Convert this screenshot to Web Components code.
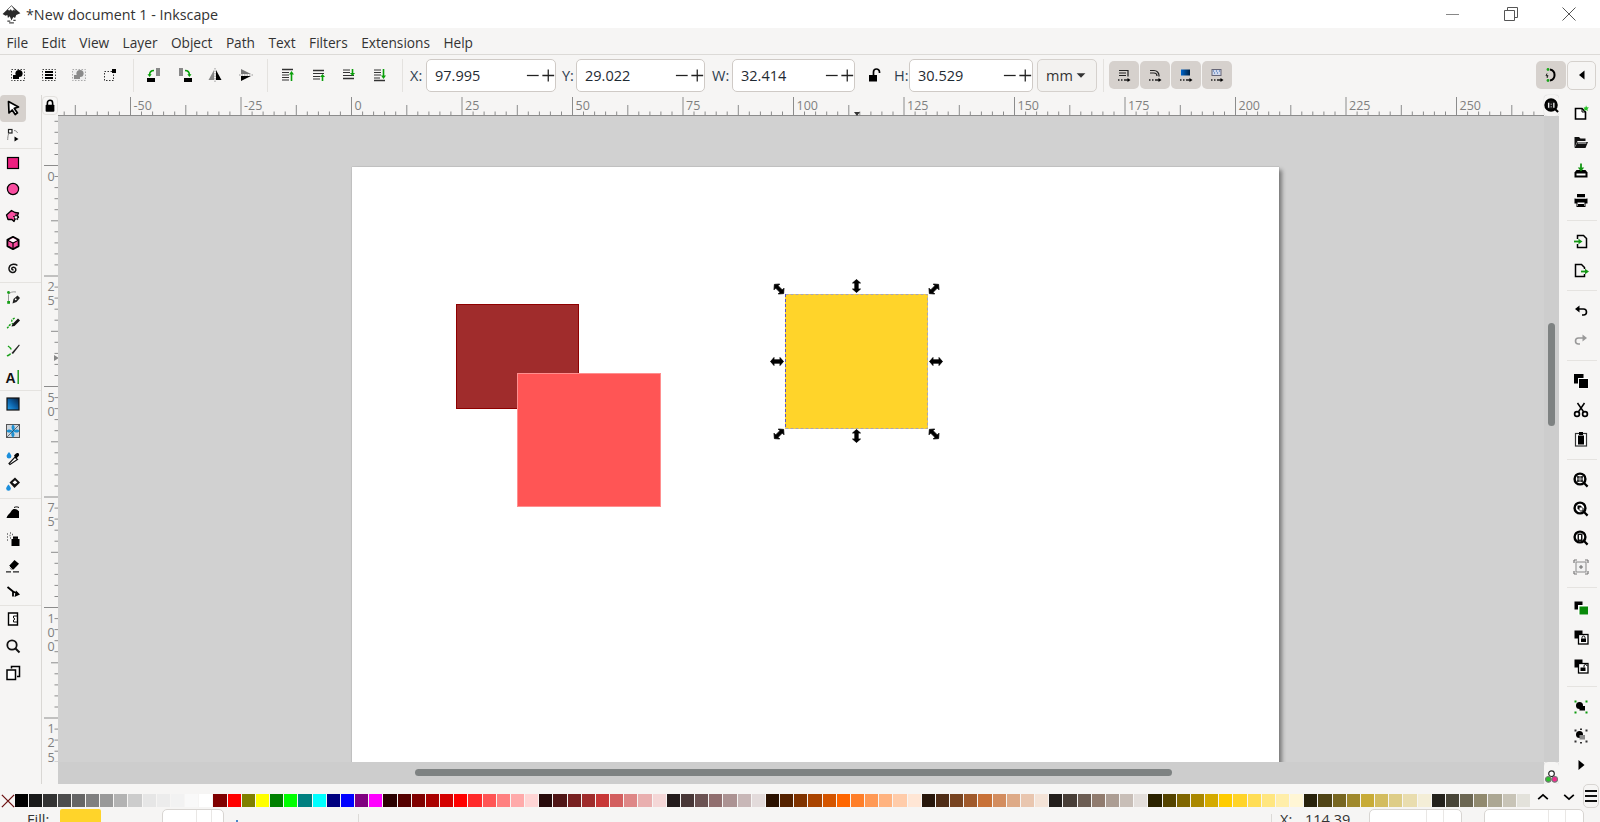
<!DOCTYPE html>
<html lang="en">
<head>
<meta charset="utf-8">
<title>Inkscape</title>
<style>
  html, body { margin: 0; height: 100%; overflow: hidden; background: #f6f5f4; }
  body { font: 14.5px "Open Sans", "Noto Sans", sans-serif; color: #2e3436; }
  ink-app { width: 1600px; height: 822px; }
</style>
</head>
<body>
<ink-app>
  <ink-titlebar>*New document 1 - Inkscape</ink-titlebar>
  <ink-menubar items="File,Edit,View,Layer,Object,Path,Text,Filters,Extensions,Help"></ink-menubar>
  <ink-toolbar></ink-toolbar>
  <ink-workspace>
    <ink-canvas slot="canvas">
      <ink-shape x="398" y="188" w="123" h="105" fill="#a02c2c" line="#8f0000"></ink-shape>
      <ink-shape x="459" y="257" w="144" h="134" fill="#ff5555" line="#ff8f8f"></ink-shape>
      <ink-shape x="727" y="178" w="143" h="135" fill="#ffd42a" line="#ffd42a"></ink-shape>
      <ink-handles x="727" y="178" w="143" h="135"></ink-handles>
    </ink-canvas>
  </ink-workspace>
  <ink-palette></ink-palette>
  <ink-statusbar></ink-statusbar>
</ink-app>

<script>
// --- icons, all on a 16x16 box ---
const GREEN = '#0a9f0a';
const DASH = '<rect x="1.5" y="2.5" width="13" height="11" fill="none" stroke="#444" stroke-dasharray="1.5 1.5"/>';
const LENS = (inner) => `<circle cx="7" cy="7" r="5.4" fill="#fff" stroke="#000" stroke-width="2.4"/>${inner}<path d="M11 11l3.6 3.6" stroke="#000" stroke-width="2.2"/>`;
const TWO = (front) => `<rect x="1.5" y="1.5" width="8" height="8" fill="#000"/><rect x="5" y="5" width="10" height="10" fill="#fff"/>${front}`;
const LINES = (ys) => ys.map((y) => `<path d="M2 ${y}h7" stroke="#333"/>`).join('');
const MOVE_TAIL = '<path d="M2 13h1.5M5 13h1.5M8 13h4" stroke="#222" stroke-width="1.3"/><path d="M11.5 11l3 2-3 2z"/>';
const ICONS = {
  selAll: `${DASH}<circle cx="9" cy="6.5" r="3.6"/><rect x="3" y="8" width="6" height="4"/>`,
  selLayers: `${DASH}<path d="M4 5h8M4 8h8M4 11h8" stroke="#000" stroke-width="1.8"/>`,
  deselect: `<rect x="1.5" y="2.5" width="13" height="11" fill="#eee" stroke="#aaa" stroke-dasharray="1.5 1.5"/><circle cx="9" cy="6.5" r="3.6" fill="#8a8a8a"/><rect x="3" y="8" width="6" height="4" fill="#8a8a8a"/>`,
  selBox: `<rect x="2.5" y="4.5" width="9" height="9" fill="none" stroke="#333" stroke-dasharray="1.5 1.5"/><rect x="10" y="2" width="4" height="4"/>`,
  rotCcw: `<rect x="1" y="11" width="8" height="4"/><rect x="10" y="1" width="4" height="8" fill="#888"/><path d="M8 3.5C5 3.5 3.6 5 3.6 8" fill="none" stroke="${GREEN}" stroke-width="1.6"/><path d="M1.5 7.2h4.2L3.6 10z" fill="${GREEN}"/>`,
  rotCw: `<rect x="7" y="11" width="8" height="4"/><rect x="2" y="1" width="4" height="8" fill="#888"/><path d="M8 3.5c3 0 4.4 1.5 4.4 4.5" fill="none" stroke="${GREEN}" stroke-width="1.6"/><path d="M14.5 7.2h-4.2l2.1 2.8z" fill="${GREEN}"/>`,
  flipH: `<path d="M7 3v10H1.5z" fill="#888"/><path d="M9 3v10h5.5z"/><path d="M8 1v14" stroke="#999" stroke-dasharray="1.5 1"/>`,
  flipV: `<path d="M3 2l10 5H3z" fill="#777"/><path d="M3 9h10L3 14z"/><path d="M1 8h14" stroke="#999" stroke-dasharray="1.5 1"/>`,
  alignTop: `<path d="M2 2.5h11" stroke="#333" stroke-width="1.5"/>${LINES([5.5, 8, 10.5, 13])}<path d="M11.5 14V6" stroke="${GREEN}" stroke-width="1.6"/><path d="M9 7.5L11.5 4 14 7.5z" fill="${GREEN}"/>`,
  alignUp: `<path d="M2 3.5h11" stroke="#333" stroke-width="1.5"/><path d="M2 6.5h11" stroke="#333"/>${LINES([9.5, 12])}<path d="M11.5 14V9" stroke="${GREEN}" stroke-width="1.6"/><path d="M9 10l2.5-3L14 10z" fill="${GREEN}"/>`,
  alignDown: `${LINES([3, 5.5])}<path d="M2 8.5h11" stroke="#333"/><path d="M2 11.5h11" stroke="#333" stroke-width="1.5"/><path d="M11.5 2v5" stroke="${GREEN}" stroke-width="1.6"/><path d="M9 6l2.5 3L14 6z" fill="${GREEN}"/>`,
  alignBot: `${LINES([3, 5.5, 8])}<path d="M2 13.5h11" stroke="#333" stroke-width="1.5"/><path d="M2 11h6" stroke="#333"/><path d="M11.5 2v7" stroke="${GREEN}" stroke-width="1.6"/><path d="M9 8.5l2.5 3.5L14 8.5z" fill="${GREEN}"/>`,
  lockOpen: `<rect x="2" y="8" width="8" height="6.5"/><path d="M6.5 8V5a3 3 0 0 1 6 0v1" fill="none" stroke="#000" stroke-width="1.7"/>`,
  lockShut: `<rect x="3" y="7" width="10" height="8" rx="1"/><path d="M5 7.5V5a3 3 0 0 1 6 0v2.5" fill="none" stroke="#000" stroke-width="1.8"/>`,
  caret: `<path d="M3 6h10l-5 5z" fill="#333"/>`,
  left: `<path d="M10.5 3.5v9L5 8z"/>`,
  right: `<path d="M5.5 3v10l6-5z"/>`,
  moveRect: `<path d="M3 3.5h9v6M3 6h7M3 8.5h7" fill="none" stroke="#222" stroke-width="1.2"/>${MOVE_TAIL}`,
  moveRound: `<path d="M3 3.5h4a5 5 0 0 1 5 5v1M3 6h4a3 3 0 0 1 3 3" fill="none" stroke="#222" stroke-width="1.2"/>${MOVE_TAIL}`,
  moveGrad: `<defs><linearGradient id="bg"><stop offset="0" stop-color="#06c"/><stop offset="1" stop-color="#024"/></linearGradient></defs><rect x="3" y="2.5" width="9" height="6" fill="url(#bg)"/>${MOVE_TAIL}`,
  movePat: `<rect x="3" y="2.5" width="9" height="6" fill="#cfd8ee" stroke="#667"/><path d="M4 4h1M7 4h1M10 4h1M5 6h1M8 6h1" stroke="#36a"/>${MOVE_TAIL}`,
  snap: `<path d="M7 2.5a5.6 5.6 0 0 1 0 11" fill="none" stroke="#000" stroke-width="2"/><circle cx="5" cy="2.5" r="1.4" fill="#1aa31a"/><circle cx="5" cy="13.5" r="1.4" fill="#1aa31a"/><path d="M4 6.5L3 9l2-.5L4 11" fill="none" stroke="#222"/>`,
  oneToOne: `<circle cx="7.5" cy="7.5" r="6" stroke="#000" stroke-width="2.4" fill="#111"/><path d="M5 5v5.5M10.5 5v5.5M7.7 6v.8M7.7 9v.8" stroke="#fff" stroke-width="1.3"/><path d="M11.5 11.5L15 15" stroke="#000" stroke-width="2.2"/>`,
  select: `<path d="M3.5 1.5l10 5.5-4.200 1.400 3.200 4.500-2.300 1.600-3-4.500-3.200 3z" fill="#fff" stroke="#000" stroke-width="1.7" stroke-linejoin="round"/>`,
  node: `<rect x="3.5" y="2.5" width="3.5" height="3.5" fill="#fff" stroke="#222" stroke-width="1.2"/><path d="M9 3.5c2 .2 3 1 3.5 2.5M3.5 7c-.5 2-.8 3.5-.8 6" fill="none" stroke="#888"/><path d="M9.5 9.5l4 2.5-4 2.5z"/>`,
  rect: `<rect x="2.5" y="2.5" width="11" height="11" fill="#ed1f80" stroke="#000" stroke-width="1.2"/>`,
  circle: `<circle cx="8" cy="8" r="5.6" fill="#f84d9f" stroke="#000" stroke-width="1.2"/>`,
  star: `<path d="M6.5 2.5L10 4.500l3.500.5-1 2.500 1 2-3 .5L9 13.500l-2-2H3L1.500 7z" fill="#f84d9f" stroke="#000" stroke-width="1.3" stroke-linejoin="round"/><path d="M11 6.500l.8 1.800 1.900.2-1.400 1.300.4 1.900-1.700-1-1.700 1 .4-1.900-1.400-1.300 1.900-.2z" fill="#fff" stroke="#000" stroke-width=".9"/>`,
  box: `<path d="M8 1.8l5.600 3.100v6.200L8 14.200l-5.600-3.100V4.900z" fill="#f84d9f" stroke="#000" stroke-width="1.8" stroke-linejoin="round"/><path d="M2.800 5.200L8 8l5.200-2.800M8 8v6" fill="none" stroke="#000" stroke-width="1.2"/><path d="M8 3l4 2.200-4 2.100-4-2.100z" fill="#fff"/>`,
  spiral: `<path d="M8.5 8.5c-.8.8-2 0-1.700-1.200.4-1.500 2.900-1.600 3.800.2 1 2.200-1 4.500-3.500 4-3-.6-4-3.800-2.500-6.200C6.200 3 10 2.400 12.400 4.500" fill="none" stroke="#111" stroke-width="1.5"/>`,
  pen: `<path d="M3.5 13V5.5C5 3 8 2.500 11 3" fill="none" stroke="#999"/><circle cx="3.5" cy="3.5" r="1.4" fill="#18a018"/><rect x="2.2" y="12" width="2.8" height="2.8" fill="#18a018"/><path d="M7.5 14.500l1-4.500 4-3.500L15 9l-3.500 4z" fill="#222"/><circle cx="10.7" cy="10.3" r=".9" fill="#fff"/>`,
  pencil: `<path d="M2 13c2-1 1.500-2.500 3.500-3.500S8 9 7 7s1-3 3-4" fill="none" stroke="#18a018" stroke-width="1.4" stroke-dasharray="2 1"/><path d="M6.5 11.500l1-2.500L13 3.500l2 2L9.500 11z" fill="#111"/>`,
  callig: `<path d="M2 14c1.500-1 3-1 3.500-2.500M3 4c1.500 1 3 2 3 3.500" fill="none" stroke="#18a018" stroke-width="1.5"/><path d="M6.5 11L14 2.500l.8.7L8 12z" fill="#222"/>`,
  text: `<text x="0.5" y="13.5" font-family="Liberation Sans" font-weight="700" font-size="14" fill="#111">A</text><rect x="12.5" y="1" width="1.4" height="14" fill="#129612"/>`,
  gradient: `<defs><linearGradient id="tg" x1="1" y1="0" x2="0" y2="1"><stop offset="0" stop-color="#0a1f3a"/><stop offset=".5" stop-color="#0b5fa5"/><stop offset="1" stop-color="#29a4ee"/></linearGradient></defs><rect x="2" y="2" width="12" height="12" fill="url(#tg)" stroke="#111" stroke-width="1.2"/>`,
  mesh: `<rect x="1.5" y="1.5" width="13" height="13" fill="#cfd6dc" stroke="#555"/><path d="M8 8C6 5 6 3 8 1.500 10 3 10.500 6 8 8c3-2 5-2 6.500 0C13 10 10.500 10 8 8c2 3 2 5 0 6.500C6 13 5.500 10 8 8 5 10 3 10 1.500 8 3 6 5.500 6 8 8z" fill="#1c8fd0"/><path d="M8 8l6-6M8 8l-6 6" stroke="#123" stroke-width=".6"/>`,
  dropper: `<path d="M4 2S1.600 4.800 1.600 6.200a2.400 2.400 0 0 0 4.800 0C6.400 4.800 4 2 4 2z" fill="#1c8fdc"/><path d="M5 14.500l-1-1L10 7l2.500 2.500z" fill="#fff" stroke="#111" stroke-width="1.2"/><path d="M9 5.500l2-2c1-1 3-.5 3 .7.5 1.300-.5 2-1.500 3L11 8.700z"/>`,
  bucket: `<path d="M3.5 8.500S1.200 11 1.200 12.400a2.300 2.300 0 0 0 4.600 0C5.800 11 3.500 8.500 3.500 8.500z" fill="#1c8fdc"/><path d="M4.5 6.500l5.500-5 5 5L9.500 12z" fill="#111"/><path d="M7.5 6.500L10 4.200l2.300 2.300-2.500 1.800z" fill="#fff"/>`,
  tweak: `<path d="M1.5 14c1-3 2.500-4 3.500-5 1.200-1.200 1.800-4 4.500-4 2.700 0 3 1.600 4.500 2.200V14z"/><path d="M9 3.500c2-.8 3-.8 5 0" fill="none" stroke="#000"/>`,
  spray: `<rect x="6.5" y="8" width="8" height="7"/><rect x="8" y="5.5" width="5" height="2.4"/><path d="M2 3h1M5 2h1M2 6h1M4.500 4.500h1M7 3.500h1M5 7h1M2 9h1" stroke="#666" stroke-width="1.3"/>`,
  eraser: `<path d="M4 9l5.500-6L14 6.800l-5.500 5.700H6z"/><path d="M4 9l3 3.500" stroke="#fff"/><path d="M1 14.800h5M8 14.800h6" stroke="#222" stroke-width="1.2"/>`,
  connector: `<path d="M2.5 3L8 7.500v5M8 7.500l4.500 2" fill="none" stroke="#000" stroke-width="1.8"/><path d="M11 6.500l4 4-5.500 2.500z"/>`,
  page: `<path d="M3.5 2h9v12h-9z" fill="#fff" stroke="#000" stroke-width="1.4"/><path d="M12 5H8.500v2l1.500 1-1.500 1v2H12" fill="none" stroke="#111"/>`,
  zoom: `<circle cx="7" cy="7" r="4.700" fill="none" stroke="#111" stroke-width="1.8"/><path d="M10.500 10.500l4 4" stroke="#111" stroke-width="2"/>`,
  pages: `<path d="M6.5 3.500v-2h8v10H12" fill="none" stroke="#000" stroke-width="1.5"/><rect x="2" y="5" width="8.5" height="9.5" fill="#fff" stroke="#000" stroke-width="1.5"/>`,
  new: `<path d="M2.5 3.500H9L12.500 7v7h-10z" fill="#fff" stroke="#000" stroke-width="1.6"/><path d="M9 3.500V7h3.500" fill="none" stroke="#000"/><path d="M13 .3l.9 1.900 2 .3-1.400 1.500.3 2-1.800-1-1.800 1 .3-2L10.600 2.500l2-.3z" fill="#25c225"/>`,
  open: `<path d="M1.5 13.500V3H6l1.500 1.500h5V7h-8z" fill="#111"/><path d="M1.5 14l3-6H15l-2.500 6z" fill="#111"/><path d="M4.800 9h8.500" stroke="#eee"/>`,
  save: `<path d="M1.5 9.500l2-2.500h9l2 2.500v5h-13z"/><rect x="3.5" y="10.5" width="9" height="2" fill="#fff"/><path d="M8 .5v5" stroke="#129612" stroke-width="1.8"/><path d="M4.800 4.500h6.400L8 8.500z" fill="#129612"/>`,
  print: `<rect x="4" y="2" width="8" height="3.5"/><rect x="1.5" y="6.5" width="13" height="5"/><rect x="4" y="10" width="8" height="4.5" fill="#fff" stroke="#000"/><rect x="5" y="12" width="6" height="2.5"/><path d="M2.500 6h11" stroke="#fff"/>`,
  import: `<path d="M4.500 6V2.500h6l3 3v9h-9V11" fill="none" stroke="#000" stroke-width="1.5"/><path d="M1 8.500h5" stroke="#129612" stroke-width="1.8"/><path d="M5.500 5.800l4 2.700-4 2.700z" fill="#129612"/>`,
  export: `<path d="M11.500 7V5.500l-3-3h-6v12h9V12" fill="none" stroke="#000" stroke-width="1.5"/><path d="M8 9.500h5" stroke="#129612" stroke-width="1.8"/><path d="M12 6.800l4 2.700-4 2.700z" fill="#129612"/>`,
  undo: `<path d="M4 6h6.500a3 3 0 0 1 0 6H9" fill="none" stroke="#000" stroke-width="1.6"/><path d="M6.500 2.500L2 6l4.500 3.500z"/>`,
  redo: `<path d="M12 6H5.500a3 3 0 0 0 0 6H7" fill="none" stroke="#999" stroke-width="1.6"/><path d="M9.500 2.500L14 6 9.500 9.500z" fill="#999"/>`,
  duplicate: `<rect x="1" y="1" width="9.5" height="9.5"/><rect x="5" y="5" width="10.5" height="10.5" fill="#fff"/><rect x="6" y="6" width="9" height="9"/>`,
  cut: `<circle cx="4" cy="12" r="2.4" fill="none" stroke="#000" stroke-width="1.7"/><circle cx="12" cy="12" r="2.4" fill="none" stroke="#000" stroke-width="1.7"/><path d="M5.300 10l6.200-9M10.700 10L4.500 1" stroke="#000" stroke-width="1.5"/>`,
  paste: `<rect x="2.5" y="2.5" width="11" height="12.5" fill="#fff" stroke="#333" stroke-width="1.2"/><rect x="5" y="4.5" width="6" height="9"/><rect x="6" y="1" width="4" height="3"/>`,
  zoomSel: LENS('<rect x="4" y="4" width="6" height="6" fill="#333"/><path d="M4 7h6M7 4v6" stroke="#fff" stroke-width=".6"/>'),
  zoomDraw: LENS('<path d="M4.500 4.500h3l3 3v3h-3l-3-3z" fill="#000"/><rect x="6.5" y="6.5" width="3" height="3" fill="#fff"/>'),
  zoomPage: LENS('<rect x="4.5" y="3.5" width="5" height="7.5" fill="#111"/><rect x="6" y="5" width="2" height="4.5" fill="#fff"/>'),
  zoomCenter: `<rect x="3" y="3" width="10" height="10" fill="#f2f2f2" stroke="#8a8a8a"/><path d="M1 1h3M1 1v3M15 1h-3M15 1v3M1 15h3M1 15v-3M15 15h-3M15 15v-3" stroke="#777" stroke-width="1.2"/><path d="M6 8h4M8 6v4" stroke="#666"/>`,
  clone: TWO('<rect x="6.5" y="6.5" width="8.5" height="8" fill="#0a8a0a"/>'),
  lockClone: TWO('<rect x="5.5" y="5.5" width="9.5" height="9.5" fill="#fff" stroke="#000" stroke-width="1.3"/><rect x="8" y="9.5" width="5" height="3.5"/><path d="M9 9.500v-1a1.500 1.500 0 0 1 3 0v1" fill="none" stroke="#000"/>'),
  unlockClone: TWO('<rect x="5.5" y="5.5" width="9.5" height="9.5" fill="#fff" stroke="#000" stroke-width="1.3"/><rect x="7.5" y="9.5" width="5" height="3.5"/><path d="M11 9.500V8a1.500 1.500 0 0 1 3 0" fill="none" stroke="#000"/>'),
  group: `<circle cx="6.5" cy="6.5" r="3.5"/><rect x="6.5" y="7" width="5.5" height="4.5"/><path d="M1.500 1.500h2v2h-2zM12.500 1.500h2v2h-2zM1.500 12.500h2v2h-2zM12.500 12.500h2v2h-2z" fill="#0b990b"/>`,
  ungroup: `<circle cx="6.5" cy="6.5" r="3.5"/><rect x="6.5" y="7" width="5.5" height="4.5" fill="#8a8a8a"/><path d="M1.500 1.500h2v2h-2zM7 .5h2V2H7zM12.500 1.500h2v2h-2zM1.500 12.500h2v2h-2zM7 14h2v1.500H7zM12.500 12.500h2v2h-2z" fill="#333"/>`,
  cms: `<circle cx="8" cy="5" r="3" fill="#fff" stroke="#222" stroke-width="1.2"/><circle cx="4.6" cy="11" r="3" fill="#2bc22b" stroke="#777" stroke-width="1.2"/><circle cx="11.4" cy="11" r="3" fill="#f52a8f" stroke="#777" stroke-width="1.2"/>`,
  up: `<path d="M2.500 10.500L8 5.500l5.500 5" fill="none" stroke="#000" stroke-width="2"/>`,
  down: `<path d="M2.500 5.500L8 10.500l5.500-5" fill="none" stroke="#000" stroke-width="2"/>`,
  none: `<path d="M1 1l14 14M15 1L1 15" stroke="#6d1111" stroke-width="1.5"/>`,
  minus: `<path d="M1 8h13" stroke="#222" stroke-width="1.4"/>`,
  plus: `<path d="M1.500 8h13M8 1.500v13" stroke="#222" stroke-width="1.4"/>`,
  logo: `<path d="M8 .5L.5 7.500 3 9l1.500-.5L5 11l1.500-1.500L8 13l1.500-3 1.500 1 1-2.500 3.500-1.500z" fill="#2a2a2a"/><path d="M8 .5L4.500 4l1.800.8 1-1 1.200 1.400 1.200-1 1.800.8z" fill="#fff" stroke="#2a2a2a" stroke-width=".4"/><path d="M4.500 13.500h2.500M6 15h4M9.500 13h2" stroke="#444"/>`,
};

const svg = (name, size = 16) => `<svg width="${size}" height="${size}" viewBox="0 0 16 16">${ICONS[name]}</svg>`;

class InkApp extends HTMLElement {
  constructor() {
    super();
    this.attachShadow({ mode: 'open' }).innerHTML = `
      <style>:host { display: flex; flex-direction: column; overflow: hidden; background: #f6f5f4; }</style>
      <slot></slot>`;
  }
}

class InkTitlebar extends HTMLElement {
  constructor() {
    super();
    this.attachShadow({ mode: 'open' }).innerHTML = `
      <style>
        :host { display: flex; align-items: center; flex: none; height: 28px; padding-right: 2px; background: #fff; color: #333; font-size: 14.3px; }
        .logo { display: flex; margin: 0 5px 0 2px; }
        .title { flex: 1; }
        .ctl { display: flex; width: 58px; justify-content: center; }
      </style>
      <span class="logo">${svg('logo', 19)}</span>
      <span class="title"><slot></slot></span>
      <span class="ctl"><svg width="14" height="14"><path d="M0 7.500h13" stroke="#888"/></svg></span>
      <span class="ctl"><svg width="14" height="14"><path d="M.5 3.500h10v10H.5zM3.500 3.500V.5h10v10h-3" fill="none" stroke="#555"/></svg></span>
      <span class="ctl"><svg width="14" height="14"><path d="M.5.5l13 13M13.500.5l-13 13" stroke="#555"/></svg></span>`;
  }
}

class InkMenubar extends HTMLElement {
  connectedCallback() {
    const items = this.getAttribute('items').split(',');
    this.attachShadow({ mode: 'open' }).innerHTML = `
      <style>
        :host { display: flex; align-items: center; flex: none; height: 27px; box-sizing: border-box; padding: 2px 0 0 6.5px; gap: 13.4px;
          background: #f6f5f4; border-bottom: 1px solid #dcdad7; font-size: 13.7px; color: #333; }
      </style>
      ${items.map((i) => `<span>${i}</span>`).join('')}`;
  }
}

class InkSpin extends HTMLElement {
  connectedCallback() {
    this.attachShadow({ mode: 'open' }).innerHTML = `
      <style>
        :host { display: flex; align-items: center; flex: none; box-sizing: border-box; height: 33px; background: #fff;
          border: 1px solid #cfcac6; border-radius: 5px; font-size: 14.5px; color: #1f2a33; }
        .v { flex: 1; padding-left: 8px; }
        .b { display: flex; width: 14.5px; justify-content: center; }
      </style>
      <span class="v">${this.getAttribute('value') || ''}</span>
      <span class="b">${svg('minus', 15)}</span><span class="b">${svg('plus', 15)}</span>`;
  }
}

class InkToolbar extends HTMLElement {
  connectedCallback() {
    const btn = (n) => `<span class="b">${svg(n)}</span>`;
    const tint = (n) => `<span class="t">${svg(n)}</span>`;
    this.attachShadow({ mode: 'open' }).innerHTML = `
      <style>
        :host { display: flex; align-items: center; flex: none; height: 40px; padding-left: 2.5px; background: #f6f5f4; font-size: 14.5px; color: #2e3d4f; }
        .b { display: flex; width: 30.75px; justify-content: center; }
        .s { width: 1px; height: 33px; background: #e4e2df; flex: none; }
        .l { flex: none; }
        .t { display: flex; align-items: center; justify-content: center; width: 30px; height: 28px; background: #d6d1cd; border-radius: 5px; margin-right: 1px; flex: none; }
        .unit { display: flex; align-items: center; justify-content: center; gap: 1px; box-sizing: border-box; width: 60px; height: 33px; margin-left: 4px;
          background: #f3f2f0; border: 1px solid #d5d1cd; border-radius: 5px; color: #333; }
        .arrow { display: flex; align-items: center; justify-content: center; box-sizing: border-box; width: 29px; height: 29px; background: #f6f5f4; border: 1px solid #d5d1cd; border-radius: 5px; }
      </style>
      ${btn('selAll')}${btn('selLayers')}${btn('deselect')}${btn('selBox')}
      <span class="s" style="margin:0 5px 0 7px"></span>
      ${btn('rotCcw')}${btn('rotCw')}${btn('flipH')}${btn('flipV')}
      <span class="s" style="margin:0 4.5px 0 5.5px"></span>
      ${btn('alignTop')}${btn('alignUp')}${btn('alignDown')}${btn('alignBot')}
      <span class="s" style="margin:0 7px 0 6.5px"></span>
      <span class="l" style="width:16px">X:</span><ink-spin value="97.995" style="width:130px"></ink-spin>
      <span class="l" style="width:14px;margin-left:6px">Y:</span><ink-spin value="29.022" style="width:129px"></ink-spin>
      <span class="l" style="width:20px;margin-left:7px">W:</span><ink-spin value="32.414" style="width:123px"></ink-spin>
      <span class="l" style="display:flex;width:39px;justify-content:center">${svg('lockOpen')}</span>
      <span class="l" style="width:15px">H:</span><ink-spin value="30.529" style="width:124px"></ink-spin>
      <span class="unit">mm ${svg('caret', 14)}</span>
      <span class="s" style="margin:0 5px 0 6px"></span>
      ${tint('moveRect')}${tint('moveRound')}${tint('moveGrad')}${tint('movePat')}
      <span style="flex:1"></span>
      ${tint('snap')}<span class="arrow">${svg('left')}</span><span style="width:4px;flex:none"></span>`;
  }
}

class InkRuler extends HTMLElement {
  connectedCallback() {
    const vertical = this.hasAttribute('vertical');
    const origin = +this.getAttribute('origin');
    const len = +this.getAttribute('length');
    const step = 110.5 / 10; // one small tick is 2.5 mm
    const size = vertical ? 17 : 21;
    let marks = '';
    let labels = '';
    for (let i = -Math.ceil(origin / step); origin + i * step < len; i++) {
      const p = +(origin + i * step).toFixed(1) + 0.5;
      const h = i % 10 === 0 ? size - 2 : i % 5 === 0 ? (vertical ? 8 : 11) : 4.5;
      if (vertical) marks += `M${size - h} ${p}H${size}`;
      else marks += `M${p} ${size - h}V${size}`;
      if (i % 10 === 0) {
        const value = String(i * 2.5);
        if (vertical) {
          [...value].forEach((ch, n) => {
            labels += `<text x="9" y="${p + 15 + n * 14.3}" text-anchor="middle">${ch}</text>`;
          });
        } else {
          labels += `<text x="${p + 3}" y="14.5">${value}</text>`;
        }
      }
    }
    const w = vertical ? size : len;
    const h = vertical ? len : size;
    const pointer = vertical
      ? `<path d="M12 ${+this.getAttribute('mark') - 3}l5 3-5 3z" fill="#888"/>`
      : `<path d="M${+this.getAttribute('mark') - 3} 17l3 4 3-4z" fill="#333"/>`;
    const axis = vertical ? `<path d="M${size - .5} 0V${len}" stroke="#8c8c8c"/>` : `<path d="M0 ${size - .5}H${len}" stroke="#8c8c8c"/>`;
    this.attachShadow({ mode: 'open' }).innerHTML = `
      <style>
        :host { display: block; overflow: hidden; background: #f6f5f4; }
        svg { display: block; }
        text { font: 12.5px "Open Sans", sans-serif; fill: #7f7f7f; }
      </style>
      <svg width="${w}" height="${h}"><path d="${marks}" stroke="#8c8c8c" fill="none"/>${axis}${labels}${pointer}</svg>`;
  }
}

class InkShape extends HTMLElement {
  connectedCallback() {
    const [x, y, w, h] = ['x', 'y', 'w', 'h'].map((k) => this.getAttribute(k));
    this.attachShadow({ mode: 'open' }).innerHTML = `
      <style>
        :host { position: absolute; left: ${x}px; top: ${y}px; width: ${w}px; height: ${h}px; box-sizing: border-box;
          background: ${this.getAttribute('fill')}; border: 1px solid ${this.getAttribute('line')}; }
      </style>`;
  }
}

// selection box and the eight scale arrows
class InkHandles extends HTMLElement {
  connectedCallback() {
    const [x, y, w, h] = ['x', 'y', 'w', 'h'].map((k) => +this.getAttribute(k));
    const pad = 20;
    const arrow = (cx, cy, deg) => `<g transform="translate(${cx} ${cy}) rotate(${deg})"><path d="M-6.5 0l3.500-4v2.300h6V-4L6.5 0 3 4V1.700H-3V4z" fill="#000" stroke="#000" stroke-width=".8" stroke-linejoin="round"/></g>`;
    const cx = pad + w / 2;
    const cy = pad + h / 2;
    const r = pad + w;
    const b = pad + h;
    this.attachShadow({ mode: 'open' }).innerHTML = `
      <style>
        :host { position: absolute; left: ${x - pad}px; top: ${y - pad}px; }
        svg { display: block; }
      </style>
      <svg width="${w + pad * 2}" height="${h + pad * 2}">
        <path d="M${pad + .5} ${pad + .5}H${r - .5}V${b - .5}H${pad + .5}" fill="none" stroke="#a9a5b8" stroke-dasharray="3 2"/>
        <path d="M${pad + .5} ${pad}V${b}" fill="none" stroke="#5a55c0" stroke-dasharray="3 2"/>
        ${arrow(pad - 6, pad - 5, 45)}${arrow(cx, pad - 8, 90)}${arrow(r + 6, pad - 5, -45)}
        ${arrow(pad - 8, cy, 0)}${arrow(r + 8, cy, 0)}
        ${arrow(pad - 6, b + 5, -45)}${arrow(cx, b + 7, 90)}${arrow(r + 6, b + 5, 45)}
      </svg>`;
  }
}

class InkCanvas extends HTMLElement {
  constructor() {
    super();
    this.attachShadow({ mode: 'open' }).innerHTML = `
      <style>
        :host { display: block; position: relative; overflow: hidden; background: #d1d1d1; }
        .page { position: absolute; left: 294px; top: 51px; width: 927px; height: 900px; background: #fff;
          box-shadow: 0 0 1px #8a8a8a, 3px 3px 4px rgba(0,0,0,.42); }
      </style>
      <div class="page"></div>
      <slot></slot>`;
  }
}

class InkToolColumn extends HTMLElement {
  connectedCallback() {
    const groups = this.getAttribute('groups').split('|').map((g) => g.split(','));
    const active = this.getAttribute('active');
    this.attachShadow({ mode: 'open' }).innerHTML = `
      <style>
        :host { display: flex; flex-direction: column; flex: none; box-sizing: border-box; background: #f6f5f4; }
        .i { display: flex; align-items: center; justify-content: center; flex: none; width: var(--w); height: var(--h); }
        .i.on { background: #d6d1cd; border-radius: 4px; }
        .s { flex: none; height: var(--sep); display: flex; align-items: center; padding: var(--sep-pad); }
        .s::after { content: ""; flex: 1; height: 1px; background: #e5e3e0; }
      </style>
      ${groups.map((g) => g.map((n) => `<span class="i${n === active ? ' on' : ''}">${svg(n)}</span>`).join('')).join('<span class="s"></span>')}`;
  }
}

class InkWorkspace extends HTMLElement {
  constructor() {
    super();
    this.attachShadow({ mode: 'open' }).innerHTML = `
      <style>
        :host { display: flex; flex: none; height: 689px; }
        .tools { border-right: 1px solid #d9d7d4; width: 42px; --w: 26px; --h: 26.65px; --sep: 1px; --sep-pad: 0; }
        .cmds { width: 41px; padding-top: 3px; --w: 43.5px; --h: 29.05px; --sep: 12px; --sep-pad: 0 3px 0 8px; }
        .mid { flex: 1; display: grid; grid-template-columns: 16px 1fr 15px; grid-template-rows: 21px 1fr 22px; min-width: 0; }
        .lock { display: flex; align-items: center; justify-content: center; box-sizing: border-box; background: #f7f6f5;
          border: 1px solid #e3e1de; border-radius: 4px; margin: 1px 0; }
        .zoom { display: flex; align-items: center; justify-content: center; background: #f6f5f4; border-radius: 4px; box-shadow: 0 0 1px #bbb; }
        .v { background: #cdcdcd; position: relative; }
        .h { background: #cdcdcd; position: relative; }
        .thumb { position: absolute; background: #7e8282; border-radius: 4px; }
        .corner { display: flex; align-items: flex-end; justify-content: center; background: #f6f5f4; border-radius: 4px; box-shadow: 0 0 1px #bbb; }
        .blank { background: #f6f5f4; }
      </style>
      <ink-tool-column class="tools" active="select" groups="select,node|rect,circle,star,box,spiral|pen,pencil,callig,text|gradient,mesh,dropper,bucket|tweak,spray,eraser,connector|page,zoom,pages"></ink-tool-column>
      <div class="mid">
        <span class="lock">${svg('lockShut', 15)}</span>
        <ink-ruler origin="293" length="1487" mark="799"></ink-ruler>
        <span class="zoom">${svg('oneToOne', 15)}</span>
        <ink-ruler vertical origin="49" length="646" mark="242"></ink-ruler>
        <slot name="canvas"></slot>
        <div class="v"><span class="thumb" style="left:4px;top:207px;width:7px;height:103px"></span></div>
        <div class="blank"></div>
        <div class="h"><span class="thumb" style="left:357px;top:7px;width:757px;height:7px"></span></div>
        <span class="corner">${svg('cms', 15)}</span>
      </div>
      <ink-tool-column class="cmds" groups="new,open,save,print|import,export|undo,redo|duplicate,cut,paste|zoomSel,zoomDraw,zoomPage,zoomCenter|clone,lockClone,unlockClone|group,ungroup,right"></ink-tool-column>`;
  }
}

const SWATCHES = `#000 #1a1a1a #333 #4d4d4d #666 #808080 #999 #b3b3b3 #ccc #e6e6e6 #ececec #f2f2f2 #f9f9f9 #fff
#800000 #f00 #808000 #ff0 #008000 #0f0 #008080 #0ff #000080 #00f #800080 #f0f
#2b0000 #500 #800000 #a00 #d40000 #f00 #ff2a2a #f55 #ff8080 #faa #ffd5d5
#280b0b #501616 #782121 #a02c2c #c83737 #d35f5f #de8787 #e9afaf #f4d7d7
#241c1c #483737 #6c5353 #916f6f #ac9393 #c8b7b7 #e3dbdb
#2b1100 #520 #803300 #a40 #d45500 #f60 #ff7f2a #f95 #ffb380 #fca #ffe6d5
#28170b #502d16 #784421 #a05a2c #c87137 #d38d5f #deaa87 #e9c6af #f4e3d7
#241f1c #483e37 #6c5d53 #917c6f #ac9d93 #c8beb7 #e3dedb
#2b2200 #540 #806600 #a80 #d4aa00 #fc0 #ffd42a #fd5 #ffe680 #fea #fff6d5
#28220b #504416 #786721 #a0892c #c8ab37 #d3bc5f #decd87 #e9ddaf #f4eed7
#24221c #484537 #6c6753 #918a6f #aca793 #c8c4b7 #e3e2db`.split(/\s+/);

class InkPalette extends HTMLElement {
  connectedCallback() {
    this.attachShadow({ mode: 'open' }).innerHTML = `
      <style>
        :host { display: flex; flex: none; height: 24px; background: #f6f5f4; }
        .none { display: flex; width: 15px; height: 14px; margin-top: 10px; justify-content: center; flex: none; }
        .grid { display: grid; grid-template-columns: repeat(${SWATCHES.length}, 1fr); gap: 1px; width: 1515px; height: 13px; margin-top: 10px; flex: none; }
        .chev { display: flex; align-items: center; justify-content: center; width: 26px; height: 26px; flex: none; }
        .more { display: flex; flex-direction: column; gap: 3px; justify-content: center; align-items: center; box-sizing: border-box; width: 16px; height: 24px;
          margin-left: 1px; border: 1px solid #d8d5d2; border-radius: 5px; flex: none; }
        .more i { display: block; width: 12px; height: 2px; background: #111; }
      </style>
      <span class="none">${svg('none', 14)}</span>
      <div class="grid">${SWATCHES.map((c) => `<span style="background:${c}"></span>`).join('')}</div>
      <span class="chev">${svg('up', 14)}</span><span class="chev">${svg('down', 14)}</span>
      <span class="more"><i></i><i></i><i></i></span>`;
  }
}

class InkStatusbar extends HTMLElement {
  connectedCallback() {
    const box = (w, a, b) => `<span class="box" style="width:${w}px"><i style="left:${a}px"></i><i style="left:${b}px"></i></span>`;
    this.attachShadow({ mode: 'open' }).innerHTML = `
      <style>
        :host { display: flex; flex: none; height: 14px; overflow: hidden; background: #f6f5f4; font-size: 14.5px; color: #333; }
        .t { flex: none; margin-top: 2px; line-height: 20px; }
        .fill { flex: none; width: 41px; height: 24px; margin: 1px 61px 0 13px; background: #ffd42a; border-radius: 2px; }
        .box { position: relative; flex: none; box-sizing: border-box; height: 30px; margin-top: 1px; background: #fff; border: 1px solid #d8d5d2; border-radius: 5px; }
        .box i { position: absolute; top: 0; bottom: 0; width: 1px; background: #e9e7e5; }
        .sep { flex: none; width: 1px; height: 20px; margin-top: 6px; background: #dcdad7; }
        .tick { flex: none; width: 2px; height: 4px; margin: 12px 120px 0 12px; background: #4a86c8; }
      </style>
      <span class="t" style="margin-left:27px;width:20px">Fill:</span>
      <span class="fill"></span>
      ${box(62, 33, 48)}
      <span class="tick"></span>
      <span class="sep" style="margin-right:912px"></span>
      <span class="sep"></span>
      <span class="t" style="margin-left:8px;width:25px">X:</span>
      <span class="t" style="width:64px">114.39</span>
      ${box(93, 56, 73)}
      <span style="width:22px;flex:none"></span>
      ${box(100, 63, 80)}`;
  }
}

customElements.define('ink-app', InkApp);
customElements.define('ink-titlebar', InkTitlebar);
customElements.define('ink-menubar', InkMenubar);
customElements.define('ink-spin', InkSpin);
customElements.define('ink-toolbar', InkToolbar);
customElements.define('ink-ruler', InkRuler);
customElements.define('ink-shape', InkShape);
customElements.define('ink-handles', InkHandles);
customElements.define('ink-canvas', InkCanvas);
customElements.define('ink-tool-column', InkToolColumn);
customElements.define('ink-workspace', InkWorkspace);
customElements.define('ink-palette', InkPalette);
customElements.define('ink-statusbar', InkStatusbar);
</script>
</body>
</html>
